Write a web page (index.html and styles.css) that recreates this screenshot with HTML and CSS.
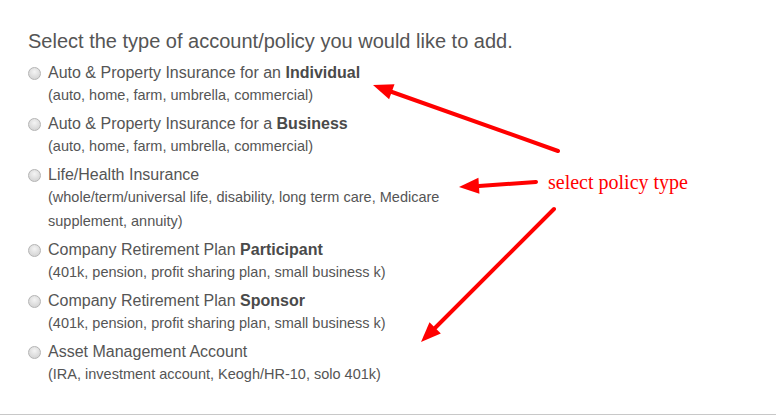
FILE: index.html
```html
<!DOCTYPE html>
<html lang="en">
<head>
    <meta charset="UTF-8">
    <meta name="viewport" content="width=device-width, initial-scale=1.0">
    <title>Add Account or Policy</title>
    <link rel="stylesheet" href="styles.css">
</head>
<body>
    <div class="page">
        <h1>Select the type of account/policy you would like to add.</h1>
        <form class="options">
            <label class="option">
                <input type="radio" name="type" value="individual">
                <span class="text">
                    <span class="main">Auto &amp; Property Insurance for an <b>Individual</b></span>
                    <span class="sub">(auto, home, farm, umbrella, commercial)</span>
                </span>
            </label>
            <label class="option">
                <input type="radio" name="type" value="business">
                <span class="text">
                    <span class="main">Auto &amp; Property Insurance for a <b>Business</b></span>
                    <span class="sub">(auto, home, farm, umbrella, commercial)</span>
                </span>
            </label>
            <label class="option">
                <input type="radio" name="type" value="life">
                <span class="text">
                    <span class="main">Life/Health Insurance</span>
                    <span class="sub">(whole/term/universal life, disability, long term care, Medicare supplement, annuity)</span>
                </span>
            </label>
            <label class="option">
                <input type="radio" name="type" value="participant">
                <span class="text">
                    <span class="main">Company Retirement Plan <b>Participant</b></span>
                    <span class="sub">(401k, pension, profit sharing plan, small business k)</span>
                </span>
            </label>
            <label class="option">
                <input type="radio" name="type" value="sponsor">
                <span class="text">
                    <span class="main">Company Retirement Plan <b>Sponsor</b></span>
                    <span class="sub">(401k, pension, profit sharing plan, small business k)</span>
                </span>
            </label>
            <label class="option">
                <input type="radio" name="type" value="asset">
                <span class="text">
                    <span class="main">Asset Management Account</span>
                    <span class="sub">(IRA, investment account, Keogh/HR-10, solo 401k)</span>
                </span>
            </label>
        </form>

        <!-- annotation drawn over the form -->
        <div class="note">select policy type</div>
        <svg class="arrows" width="776" height="416" viewBox="0 0 776 416">
            <g stroke="#f00" stroke-width="4" stroke-linecap="round" fill="none">
                <line x1="558" y1="151" x2="392" y2="92"/>
                <line x1="536" y1="182" x2="479" y2="186"/>
                <line x1="554" y1="209" x2="435" y2="328"/>
            </g>
            <g fill="#f00">
                <polygon points="373,85 394.5,84.2 389.1,99.2"/>
                <polygon points="459,187 479.4,193.7 478.4,177.7"/>
                <polygon points="421,342 440.8,333.6 429.5,322.2"/>
            </g>
        </svg>
    </div>
</body>
</html>
```

FILE: styles.css
```css
body {
    margin: 0;
    font-family: 'Liberation Sans', Arial, sans-serif;
    color: #555;
    background-color: #fff;
}

.page {
    position: relative;
    height: 415px;
    padding: 0 0 0 28px;
    box-sizing: border-box;
    border-bottom: 1px solid #c8c8c8;
    overflow: hidden;
}

h1 {
    margin: 0;
    padding-top: 30px;
    font-size: 20px;
    font-weight: normal;
    line-height: 23px;
}

.options {
    display: flex;
    flex-direction: column;
    gap: 7px;
    margin-top: 10px;
}

.option {
    display: flex;
    align-items: flex-start;
    gap: 7px;
    cursor: pointer;
}

.option input {
    appearance: none;
    width: 13px;
    height: 13px;
    margin: 4px 0 0 0;
    border: 1px solid #b4b4b4;
    border-radius: 50%;
    background: radial-gradient(circle at 50% 35%, #f4f4f4 0%, #dcdcdc 60%, #cfcfcf 100%);
    box-sizing: border-box;
    flex-shrink: 0;
}

.text {
    display: flex;
    flex-direction: column;
    width: 410px;
}

.main {
    font-size: 16px;
    line-height: 20px;
}

.main b {
    color: #4a4a4a;
}

.sub {
    font-size: 14.5px;
    line-height: 24px;
}

.note {
    position: absolute;
    left: 548px;
    top: 172px;
    font-family: 'Liberation Serif', 'Times New Roman', serif;
    font-size: 20px;
    line-height: 20px;
    color: #f00;
}

.arrows {
    position: absolute;
    left: 0;
    top: 0;
}
```
